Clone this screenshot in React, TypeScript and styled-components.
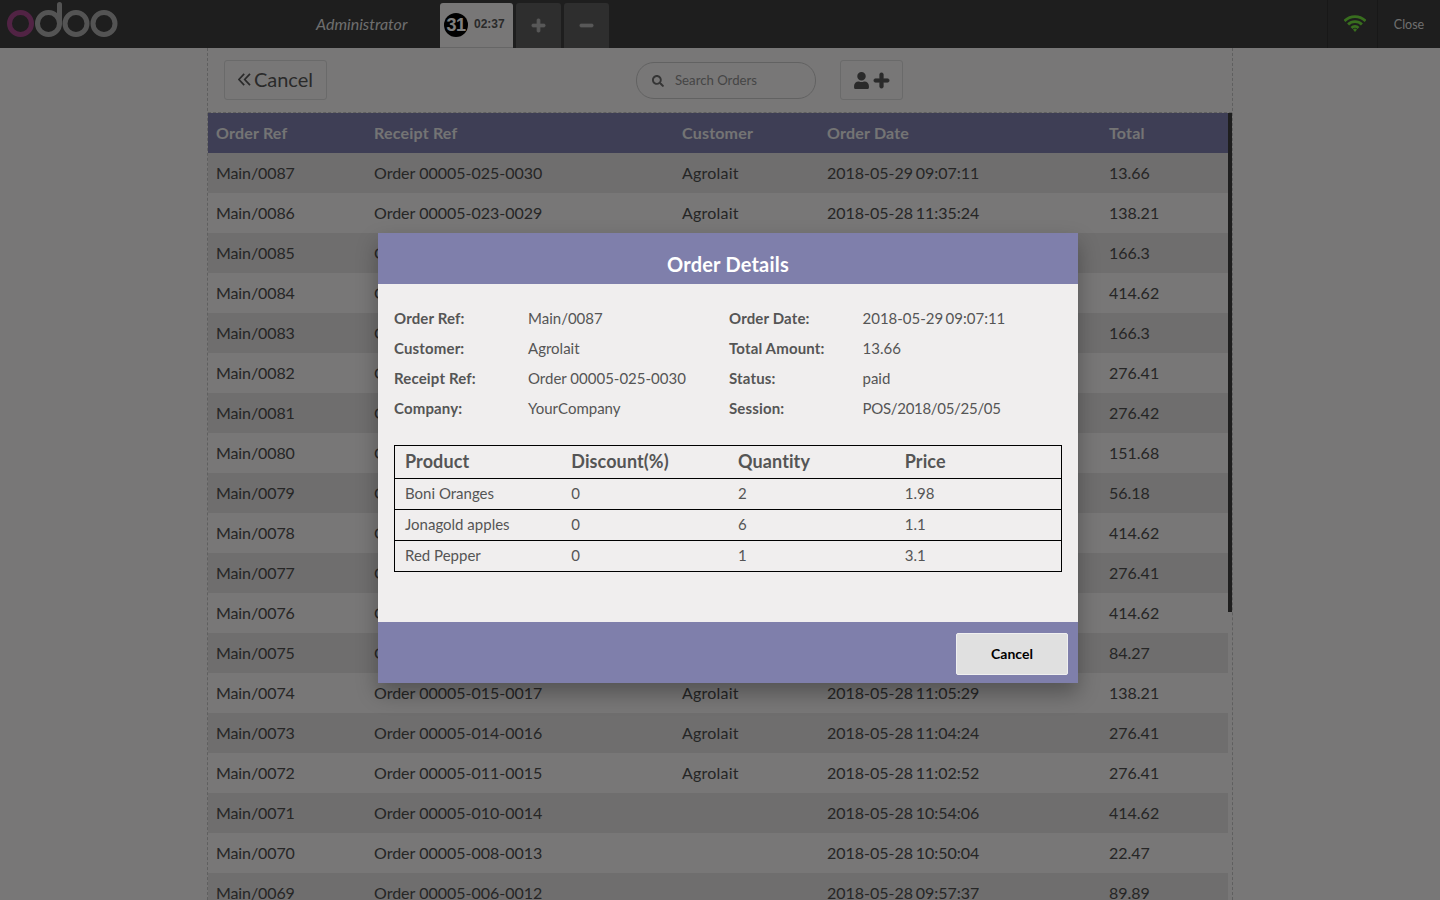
import React from "react";
import styled, { createGlobalStyle } from "styled-components";
import { FaSearch, FaUser, FaPlus, FaMinus } from "react-icons/fa";

const Global = createGlobalStyle`
  html, body { margin: 0; padding: 0; height: 100%; overflow: hidden; }
  body { background: #f0eeee; font-family: Lato, "Noto Sans", sans-serif; color: #4c4c4c; }
  * { box-sizing: border-box; }
`;

const Shell = styled.div`
  position: relative;
  width: 1440px;
  height: 900px;
  overflow: hidden;
  display: flex;
  flex-direction: column;
`;

const TopBar = styled.header`
  height: 48px;
  flex: none;
  background: #3c3c3c;
  display: flex;
  align-items: stretch;
`;

const LogoSlot = styled.div`
  width: 316px;
  flex: none;
`;

const UserName = styled.div`
  width: 124px;
  flex: none;
  font-size: 16px;
  font-style: italic;
  color: #ddd;
  line-height: 48px;
`;

const Tabs = styled.div`
  display: flex;
  gap: 3px;
  padding-top: 3px;
  flex: 1;
`;

const ActiveTab = styled.div`
  width: 73px;
  background: #f0eeee;
  border-radius: 3px 3px 0 0;
  border-bottom: 1px solid #ccc;
  display: flex;
  align-items: flex-start;
  padding: 10px 0 0 4px;
  gap: 6px;
`;

const Badge = styled.span`
  width: 24px;
  height: 24px;
  border-radius: 50%;
  background: #000;
  color: #fff;
  font-size: 18px;
  font-weight: 700;
  display: flex;
  align-items: center;
  justify-content: center;
  letter-spacing: -0.5px;
  font-family: "Liberation Sans", sans-serif;
`;

const Clock = styled.span`
  font: 700 12px "Liberation Sans", Arial, sans-serif;
  color: #555;
  padding-top: 4px;
`;

const SquareTab = styled.div`
  width: 45px;
  background: #5c5c5c;
  border-radius: 3px 3px 0 0;
  color: #b0b0b0;
  font-size: 15px;
  display: flex;
  align-items: center;
  justify-content: center;
  svg { stroke: currentColor; stroke-width: 30; }
`;

const StatusCell = styled.div`
  border-left: 1px solid #303030;
  display: flex;
  align-items: center;
  justify-content: center;
`;

const WifiCell = styled(StatusCell)`
  width: 50px;
  padding: 0 0 2px 4px;
`;

const CloseCell = styled(StatusCell)`
  width: 63px;
  color: #ddd;
  font-size: 12.5px;
`;

const Content = styled.main`
  width: 1026px;
  margin-left: 207px;
  flex: 1;
  border-left: 1px dashed #bfbfbf;
  border-right: 1px dashed #bfbfbf;
  min-height: 0;
  display: flex;
  flex-direction: column;
`;

const Actions = styled.div`
  height: 65px;
  flex: none;
  border-bottom: 1px dashed #bfbfbf;
  display: flex;
  align-items: flex-start;
  padding: 12px 0 0 16px;
`;

const CancelTop = styled.button`
  width: 103px;
  height: 40px;
  border: 1px solid #d4d4d4;
  border-radius: 3px;
  background: #f0eeee;
  color: #555;
  font: 20px Lato, sans-serif;
  letter-spacing: -0.05px;
  display: flex;
  align-items: center;
  padding: 0 0 2px 13px;
  gap: 3px;
`;

const Search = styled.div`
  width: 180px;
  height: 37px;
  margin: 2px 0 0 309px;
  border: 1px solid #c4c4c4;
  border-radius: 18px;
  background: #f0eeee;
  display: flex;
  align-items: center;
  padding: 0 0 2px 15px;
  gap: 11px;
  font-size: 13.2px;
  color: #8b8b8b;
  svg { font-size: 12px; color: #6a6a6a; margin-top: 2px; }
`;

const AddCustomer = styled.button`
  width: 63px;
  height: 40px;
  margin-left: 24px;
  border: 1px solid #d4d4d4;
  border-radius: 3px;
  background: #f0eeee;
  color: #555;
  display: flex;
  align-items: center;
  justify-content: center;
  gap: 3px;
  padding: 0;
  svg:last-child { stroke: currentColor; stroke-width: 30; }
`;

const TableWrap = styled.div`
  flex: 1;
  min-height: 0;
  overflow: hidden;
  position: relative;
  padding-right: 4px;
`;

const ScrollThumb = styled.div`
  position: absolute;
  top: 0;
  right: 0;
  width: 4px;
  height: 499px;
  background: #3c3c3c;
`;

const Orders = styled.table`
  width: 1020px;
  border-collapse: collapse;
  table-layout: fixed;
  font-size: 16px;
  color: #4c4c4c;
`;

const HeadRow = styled.tr`
  height: 40px;
  background: #7c7cab;
`;

const HeadCell = styled.th<{ $w: number }>`
  width: ${(p) => p.$w}px;
  text-align: left;
  padding: 0 8px 2px;
  color: #e8e8e8;
  font-weight: 700;
  font-size: 16px;
  letter-spacing: 0.2px;
`;

const Row = styled.tr<{ $odd: boolean }>`
  height: 40px;
  background: ${(p) => (p.$odd ? "#dedcdc" : "#f0eeee")};
`;

const Cell = styled.td<{ $tracking: number; $words: number }>`
  padding: 0 8px 2px;
  white-space: nowrap;
  overflow: hidden;
  letter-spacing: ${(p) => p.$tracking}px;
  word-spacing: ${(p) => p.$words}px;
`;

const Overlay = styled.div`
  position: absolute;
  inset: 0;
  background: rgba(0, 0, 0, 0.5);
`;

const Modal = styled.section`
  position: absolute;
  left: 378px;
  top: 233px;
  width: 700px;
  height: 450px;
  background: #f0eeee;
  display: flex;
  flex-direction: column;
  box-shadow: 0 10px 20px rgba(0, 0, 0, 0.3);
`;

const ModalHead = styled.h2`
  margin: 0;
  height: 51px;
  flex: none;
  background: #7f7fab;
  color: #fff;
  font-size: 20px;
  font-weight: 700;
  letter-spacing: 0.2px;
  text-align: center;
  line-height: 62px;
`;

const ModalBody = styled.div`
  flex: 1;
  padding: 19px 16px 0;
`;

const Summary = styled.div`
  display: grid;
  grid-template-columns: 134px 201px 133.5px 1fr;
  grid-auto-rows: 30px;
  align-items: center;
  font-size: 15px;
  color: #555;
`;

const Value = styled.span<{ $tracking?: number; $words?: number }>`
  letter-spacing: ${(p) => p.$tracking ?? 0}px;
  word-spacing: ${(p) => p.$words ?? 0}px;
`;

const Label = styled.span`
  font-weight: 700;
  letter-spacing: 0.15px;
`;

const Lines = styled.table`
  margin-top: 22px;
  width: 668px;
  border-collapse: collapse;
  table-layout: fixed;
  color: #555;
  font-size: 15px;
`;

const LineHead = styled.tr`
  height: 33px;
  border: 1px solid #000;
  font-size: 18px;
`;

const LineTh = styled.th`
  text-align: left;
  font-weight: 700;
  padding: 0 10px 2px;
  letter-spacing: 0.1px;
`;

const LineRow = styled.tr`
  height: 31px;
  border: 1px solid #000;
`;

const LineTd = styled.td`
  padding: 0 10px 2px;
`;

const ModalFoot = styled.footer`
  height: 61px;
  flex: none;
  background: #7f7fab;
  display: flex;
  justify-content: flex-end;
  padding: 11px 10px 0;
`;

const FootButton = styled.button`
  width: 112px;
  height: 42px;
  background: #e0e0e0;
  border: 1px solid #efefef;
  border-radius: 2px;
  color: #000;
  font: 700 14px Lato, sans-serif;
  padding: 0 0 2px;
`;

const rows: [string, string, string, string, string][] = [
  ["Main/0087", "Order 00005-025-0030", "Agrolait", "2018-05-29 09:07:11", "13.66"],
  ["Main/0086", "Order 00005-023-0029", "Agrolait", "2018-05-28 11:35:24", "138.21"],
  ["Main/0085", "Order 00005-022-0028", "Agrolait", "2018-05-28 11:30:12", "166.3"],
  ["Main/0084", "Order 00005-021-0027", "Agrolait", "2018-05-28 11:25:40", "414.62"],
  ["Main/0083", "Order 00005-020-0026", "Agrolait", "2018-05-28 11:22:18", "166.3"],
  ["Main/0082", "Order 00005-019-0025", "Agrolait", "2018-05-28 11:20:03", "276.41"],
  ["Main/0081", "Order 00005-018-0024", "Agrolait", "2018-05-28 11:16:47", "276.42"],
  ["Main/0080", "Order 00005-017-0023", "Agrolait", "2018-05-28 11:14:31", "151.68"],
  ["Main/0079", "Order 00005-016-0022", "Agrolait", "2018-05-28 11:12:09", "56.18"],
  ["Main/0078", "Order 00005-016-0021", "Agrolait", "2018-05-28 11:10:55", "414.62"],
  ["Main/0077", "Order 00005-016-0020", "Agrolait", "2018-05-28 11:08:42", "276.41"],
  ["Main/0076", "Order 00005-015-0019", "Agrolait", "2018-05-28 11:07:16", "414.62"],
  ["Main/0075", "Order 00005-015-0018", "Agrolait", "2018-05-28 11:06:21", "84.27"],
  ["Main/0074", "Order 00005-015-0017", "Agrolait", "2018-05-28 11:05:29", "138.21"],
  ["Main/0073", "Order 00005-014-0016", "Agrolait", "2018-05-28 11:04:24", "276.41"],
  ["Main/0072", "Order 00005-011-0015", "Agrolait", "2018-05-28 11:02:52", "276.41"],
  ["Main/0071", "Order 00005-010-0014", "", "2018-05-28 10:54:06", "414.62"],
  ["Main/0070", "Order 00005-008-0013", "", "2018-05-28 10:50:04", "22.47"],
  ["Main/0069", "Order 00005-006-0012", "", "2018-05-28 09:57:37", "89.89"],
];

const cols: [string, number][] = [
  ["Order Ref", 158],
  ["Receipt Ref", 308],
  ["Customer", 145],
  ["Order Date", 282],
  ["Total", 127],
];

const colTracking = [-0.1, 0, 0.2, 0, 0];
const colWords = [0, 0, 0, -1.5, 0];

const summary = [
  ["Order Ref:", "Main/0087", "Order Date:", "2018-05-29 09:07:11"],
  ["Customer:", "Agrolait", "Total Amount:", "13.66"],
  ["Receipt Ref:", "Order 00005-025-0030", "Status:", "paid"],
  ["Company:", "YourCompany", "Session:", "POS/2018/05/25/05"],
];

const lines = [
  ["Boni Oranges", "0", "2", "1.98"],
  ["Jonagold apples", "0", "6", "1.1"],
  ["Red Pepper", "0", "1", "3.1"],
];

const OdooLogo = () => (
  <svg width="120" height="40" viewBox="0 0 120 40" fill="none" strokeWidth="5">
    <circle cx="20.5" cy="23.5" r="11" stroke="#a24689" />
    <circle cx="48.5" cy="23.5" r="11" stroke="#a9a9a9" />
    <path d="M59.5 23V4.5" stroke="#a9a9a9" strokeLinecap="round" />
    <circle cx="76" cy="23.5" r="11" stroke="#a9a9a9" />
    <circle cx="104" cy="23.5" r="11" stroke="#a9a9a9" />
  </svg>
);

const WifiIcon = () => (
  <svg width="22" height="17" viewBox="0 0 22 17" fill="none" stroke="#70dc3c" strokeWidth="2.8">
    <path d="M.5 5.9a15 15 0 0 1 21 0" />
    <path d="M4.1 9.4a10 10 0 0 1 13.8 0" />
    <path d="M7.5 12.9a5 5 0 0 1 7 0" />
    <path d="M9 14.6 11 17l2-2.4a2.8 2.8 0 0 0-4 0z" fill="#70dc3c" stroke="none" />
  </svg>
);

const DoubleChevron = () => (
  <svg width="13" height="13" viewBox="0 0 13 13" fill="none" stroke="#555" strokeWidth="1.7">
    <path d="M6.2 .8.9 6.5l5.3 5.7" />
    <path d="M12 .8 6.7 6.5l5.3 5.7" />
  </svg>
);

export default function App() {
  return (
    <Shell>
      <Global />
      <TopBar>
        <LogoSlot>
          <OdooLogo />
        </LogoSlot>
        <UserName>Administrator</UserName>
        <Tabs>
          <ActiveTab>
            <Badge>31</Badge>
            <Clock>02:37</Clock>
          </ActiveTab>
          <SquareTab>
            <FaPlus />
          </SquareTab>
          <SquareTab>
            <FaMinus />
          </SquareTab>
        </Tabs>
        <WifiCell>
          <WifiIcon />
        </WifiCell>
        <CloseCell>Close</CloseCell>
      </TopBar>
      <Content>
        <Actions>
          <CancelTop>
            <DoubleChevron />
            Cancel
          </CancelTop>
          <Search>
            <FaSearch />
            Search Orders
          </Search>
          <AddCustomer>
            <FaUser size={17} />
            <FaPlus size={17} />
          </AddCustomer>
        </Actions>
        <TableWrap>
          <Orders>
            <thead>
              <HeadRow>
                {cols.map(([name, w]) => (
                  <HeadCell key={name} $w={w}>
                    {name}
                  </HeadCell>
                ))}
              </HeadRow>
            </thead>
            <tbody>
              {rows.map((r, i) => (
                <Row key={r[0]} $odd={i % 2 === 0}>
                  {r.map((v, j) => (
                    <Cell key={j} $tracking={colTracking[j]} $words={colWords[j]}>
                      {v}
                    </Cell>
                  ))}
                </Row>
              ))}
            </tbody>
          </Orders>
          <ScrollThumb />
        </TableWrap>
      </Content>
      <Overlay />
      <Modal>
        <ModalHead>Order Details</ModalHead>
        <ModalBody>
          <Summary>
            {summary.map((s) => (
              <React.Fragment key={s[0]}>
                <Label>{s[0]}</Label>
                <Value>{s[1]}</Value>
                <Label>{s[2]}</Label>
                <Value
                  $words={s[0] === "Order Ref:" ? -1.5 : 0}
                  $tracking={s[0] === "Company:" ? -0.3 : 0}
                >
                  {s[3]}
                </Value>
              </React.Fragment>
            ))}
          </Summary>
          <Lines>
            <thead>
              <LineHead>
                <LineTh>Product</LineTh>
                <LineTh>Discount(%)</LineTh>
                <LineTh>Quantity</LineTh>
                <LineTh>Price</LineTh>
              </LineHead>
            </thead>
            <tbody>
              {lines.map((l) => (
                <LineRow key={l[0]}>
                  {l.map((v, j) => (
                    <LineTd key={j}>{v}</LineTd>
                  ))}
                </LineRow>
              ))}
            </tbody>
          </Lines>
        </ModalBody>
        <ModalFoot>
          <FootButton>Cancel</FootButton>
        </ModalFoot>
      </Modal>
    </Shell>
  );
}
